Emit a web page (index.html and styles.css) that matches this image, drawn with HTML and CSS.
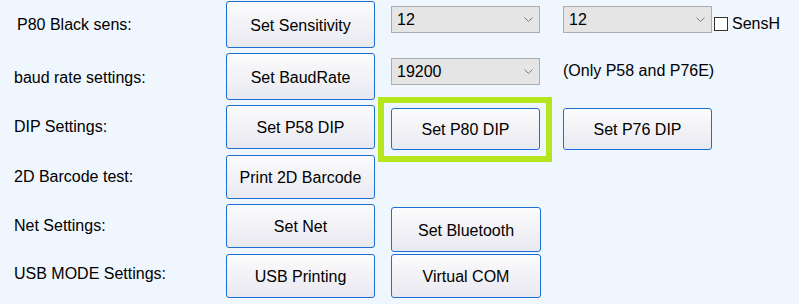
FILE: index.html
```html
<!DOCTYPE html>
<html lang="en">
<head>
  <meta charset="UTF-8">
  <title>Printer Settings</title>
  <link rel="stylesheet" href="styles.css">
</head>
<body>
  <div class="form">
    <div class="row r1">
      <div class="label first">P80 Black sens:</div>
      <button class="btn">Set Sensitivity</button>
      <div class="combo gap-a"><span>12</span><svg class="chev" width="9" height="6" viewBox="0 0 9 6"><path d="M0.5 0.5 L4.5 4.5 L8.5 0.5" fill="none" stroke="#7a7a7a" stroke-width="1"/></svg></div>
      <div class="combo gap-b"><span>12</span><svg class="chev" width="9" height="6" viewBox="0 0 9 6"><path d="M0.5 0.5 L4.5 4.5 L8.5 0.5" fill="none" stroke="#7a7a7a" stroke-width="1"/></svg></div>
      <label class="check"><span class="box"></span>SensH</label>
    </div>

    <div class="row r2">
      <div class="label">baud rate settings:</div>
      <button class="btn">Set BaudRate</button>
      <div class="combo gap-a"><span>19200</span><svg class="chev" width="9" height="6" viewBox="0 0 9 6"><path d="M0.5 0.5 L4.5 4.5 L8.5 0.5" fill="none" stroke="#7a7a7a" stroke-width="1"/></svg></div>
      <div class="note gap-b">(Only P58 and P76E)</div>
    </div>

    <div class="row r3">
      <div class="label">DIP Settings:</div>
      <button class="btn">Set P58 DIP</button>
      <button class="btn short gap-a marked">Set P80 DIP</button>
      <button class="btn short gap-b">Set P76 DIP</button>
    </div>

    <div class="row r4">
      <div class="label">2D Barcode test:</div>
      <button class="btn">Print 2D Barcode</button>
    </div>

    <div class="row r5">
      <div class="label">Net Settings:</div>
      <button class="btn">Set Net</button>
      <button class="btn tall gap-a">Set Bluetooth</button>
    </div>

    <div class="row r6">
      <div class="label raised">USB MODE Settings:</div>
      <button class="btn">USB Printing</button>
      <button class="btn wide gap-a">Virtual COM</button>
    </div>
  </div>
</body>
</html>
```

FILE: styles.css
```css
* {
  box-sizing: border-box;
}
body {
  margin: 0;
  background: #f0f6fd;
  font-family: 'Liberation Sans', Arial, sans-serif;
  font-size: 16px;
  color: #000;
}
.form {
  padding-top: 1px;
}
.row {
  display: flex;
  align-items: flex-start;
}
.r1 { height: 47px; }
.r2 { height: 47px; margin-top: 5px; }
.r3 { height: 44px; margin-top: 5px; }
.r4 { height: 44px; margin-top: 6px; }
.r5 { height: 44px; margin-top: 5px; }
.r6 { height: 44px; margin-top: 6px; }

.label {
  width: 226px;
  padding-left: 14px;
  align-self: center;
  line-height: 18px;
}
.label.first {
  padding-left: 17px;
}
.r2 .label {
  padding-top: 3px;
}
.label.raised {
  padding-bottom: 5px;
}

.btn {
  position: relative;
  width: 149px;
  height: 100%;
  padding: 2px 0 0;
  font-family: inherit;
  font-size: 16px;
  color: #000;
  border: 1px solid #1b6fd2;
  border-radius: 3px;
  background: linear-gradient(#fcfcfd, #e8e8f0);
}
.btn.short {
  height: 42px;
  margin-top: 3px;
}
.btn.tall {
  width: 150px;
  height: 45px;
  margin-top: 3px;
}
.btn.wide {
  width: 150px;
}
/* highlight frame drawn over the P80 button */
.btn.marked::after {
  content: '';
  position: absolute;
  left: -14px;
  right: -13px;
  top: -12px;
  bottom: -13px;
  border: 6px solid #b5e61d;
}
.gap-a {
  margin-left: 16px;
}
.gap-b {
  margin-left: 23px;
}

.combo {
  width: 149px;
  height: 27px;
  margin-top: 5px;
  display: flex;
  align-items: center;
  justify-content: space-between;
  padding: 0 6px 0 5px;
  background: #e5e5e5;
  border: 1px solid #adadad;
}
.chev {
  display: block;
  margin-top: 1px;
}

.check {
  display: flex;
  align-items: center;
  margin-left: 2px;
  margin-top: 14px;
  line-height: 18px;
}
.box {
  width: 14px;
  height: 14px;
  margin-right: 4px;
  background: #fff;
  border: 1px solid #333;
}

.note {
  margin-top: 9px;
  line-height: 18px;
}
```
